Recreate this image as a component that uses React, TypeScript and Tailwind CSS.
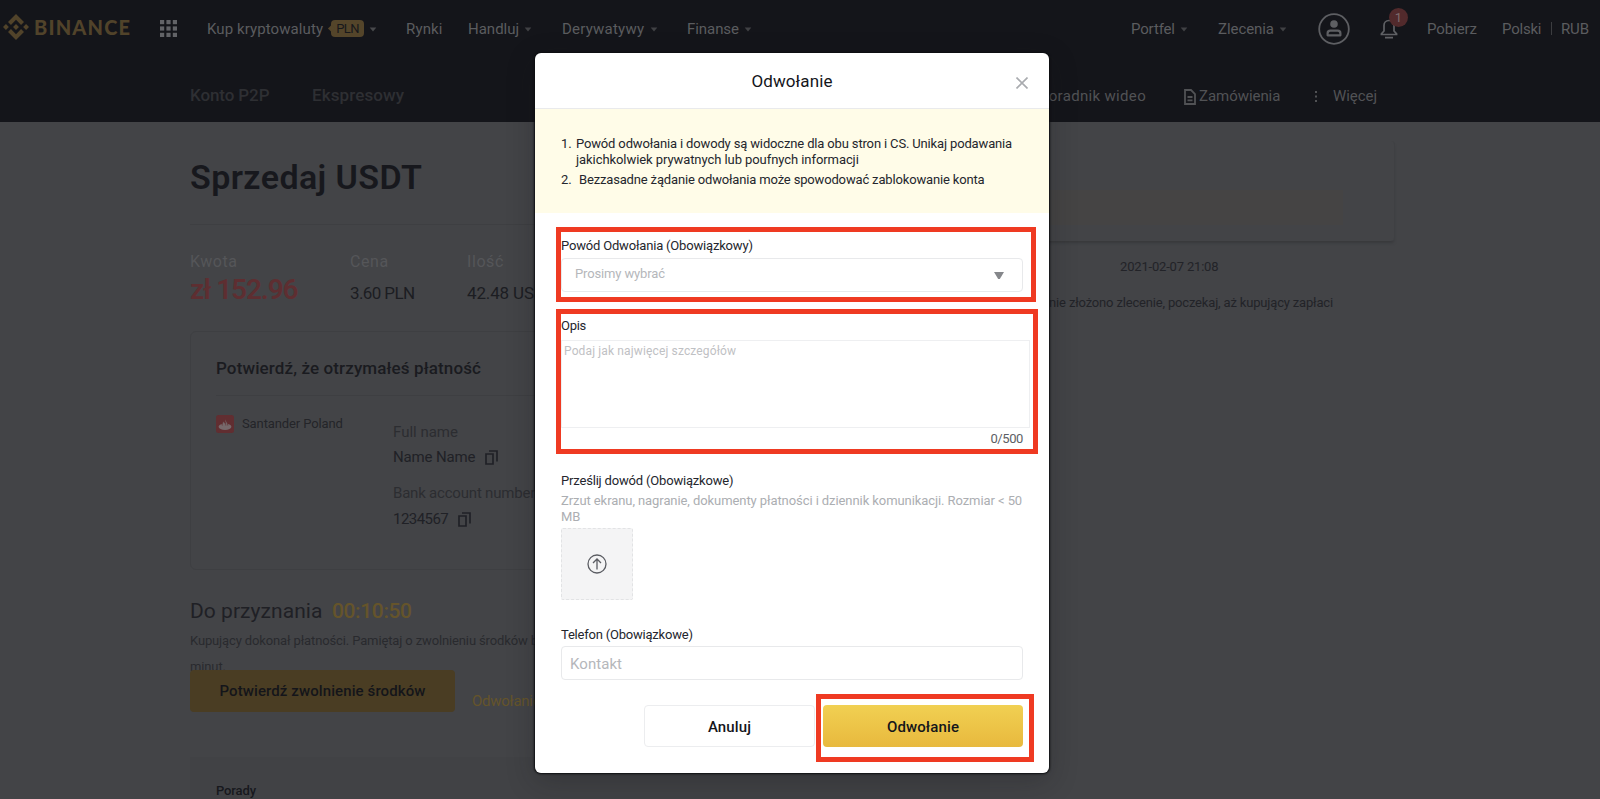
import type { ReactNode } from "react";

function Caret({ className = "" }: { className?: string }) {
  return (
    <svg viewBox="-0.5 -0.5 9 6" className={`mt-px h-[5px] w-2 shrink-0 ${className}`} fill="currentColor">
      <path d="M0 0h8L4 5z" />
    </svg>
  );
}

function Logo() {
  return (
    <div className="flex w-[157px] shrink-0 items-center pb-[4px] pl-[3px] text-[#51432a]">
      <svg viewBox="0 0 126.6 126.6" className="h-[26px] w-[26px]" fill="currentColor">
        <path d="M38.7 53.2l24.6-24.6 24.6 24.6 14.3-14.3L63.3 0 24.4 38.9zM0 63.3l14.3-14.3 14.3 14.3-14.3 14.3zM38.7 73.4l24.6 24.6 24.6-24.6 14.3 14.3-38.9 38.9-38.9-38.9zM98 63.3l14.3-14.3 14.3 14.3-14.3 14.3zM77.8 63.3L63.3 48.8 48.8 63.3l14.5 14.5z" />
      </svg>
      <span className="ml-[5px] font-[Lato] text-[20px] leading-[26px] font-black tracking-[1.17px]">BINANCE</span>
    </div>
  );
}

function GridIcon() {
  return (
    <svg viewBox="0 0 17 17" className="ml-[3px] h-[17px] w-[17px] shrink-0 text-[#626367]" fill="currentColor">
      {[0, 6.4, 12.8].map((y) =>
        [0, 6.4, 12.8].map((x) => <rect key={`${x}-${y}`} x={x} y={y} width="4.2" height="4.2" />)
      )}
    </svg>
  );
}

function CopyIcon() {
  return (
    <svg viewBox="0 0 13 15" className="h-[15px] w-[13px] text-[#202127]" fill="none" stroke="currentColor" strokeWidth="1.7">
      <path d="M1 4h7v10H1zM4 1h8v10.5" />
    </svg>
  );
}

function Navbar() {
  return (
    <nav className="flex h-[57px] items-center text-[15px] text-[#5b5c5f]">
      <Logo />
      <GridIcon />
      <span className="ml-[30px] w-[117px] pt-[2px] tracking-[0.09px]">Kup kryptowaluty</span>
      <span className="relative ml-[7px] flex h-[17px] w-[33px] items-center justify-center rounded bg-[#54452a] text-[13px] tracking-[-0.6px] text-[#17181c]">
        <i className="absolute top-[6px] -left-[2px] h-[5px] w-[5px] rotate-45 bg-[#54452a]" />
        PLN
      </span>
      <Caret className="ml-[5px] text-[#48494c]" />
      <span className="ml-[29px] w-[37px] pt-[2px] tracking-[0.16px]">Rynki</span>
      <span className="ml-[25px] w-[51px] pt-[2px]">Handluj</span>
      <Caret className="ml-[5px] text-[#404144]" />
      <span className="ml-[30px] w-[83px] pt-[2px] tracking-[0.23px]">Derywatywy</span>
      <Caret className="ml-[5px] text-[#404144]" />
      <span className="ml-[29px] w-[52px] pt-[2px] tracking-[-0.06px]">Finanse</span>
      <Caret className="ml-[5px] text-[#404144]" />
      <div className="ml-auto flex items-center pr-[11px]">
        <span className="w-[45px] pt-[2px] tracking-[-0.15px]">Portfel</span>
        <Caret className="ml-[4px] text-[#404144]" />
        <span className="ml-[30px] w-[57px] pt-[2px] tracking-[-0.07px]">Zlecenia</span>
        <Caret className="ml-[4px] text-[#404144]" />
        <svg viewBox="0 0 32 32" className="ml-[31px] h-8 w-8" fill="none" stroke="#5e5f63" strokeWidth="1.8">
          <circle cx="16" cy="16" r="14.8" />
          <circle cx="16" cy="11" r="3.8" fill="#5e5f63" stroke="none" />
          <path d="M9.6 22.300v-2.100c0-1.800 1.200-2.600 2.800-2.600h7.200c1.600 0 2.800.8 2.800 2.600v2.100z" strokeWidth="2.200" strokeLinejoin="round" />
        </svg>
        <span className="relative ml-[30px]">
          <svg viewBox="0 0 18 21" className="h-[21px] w-[18px]" fill="none" stroke="#606165" strokeWidth="1.7">
            <path d="M9 2.500c-3.200 0-5 2.300-5 5v5.500l-2.600 2.800v.7h15.200v-.7L14 13V7.500c0-2.700-1.800-5-5-5zM5 19.600h8" />
          </svg>
          <b className="absolute -top-[10px] left-[9px] flex h-[19px] w-[19px] items-center justify-center rounded-full bg-[#522a2c] text-[13px] font-normal text-[#7d6a6c]">
            1
          </b>
        </span>
        <span className="ml-[29px] w-[51px] pt-[2px] tracking-[-0.08px]">Pobierz</span>
        <span className="ml-[24px] w-[40px] pt-[2px] tracking-[-0.21px]">Polski</span>
        <i className="mx-[9px] h-[13px] w-px bg-[#3c3d40]" />
        <span className="w-[28px] pt-[2px] tracking-[-0.16px]">RUB</span>
      </div>
    </nav>
  );
}

function SubNav() {
  return (
    <div className="flex h-[65px] items-center pt-[12px] pr-[223px] pl-[190px]">
      <span className="w-[122px] text-[17px] font-medium tracking-[-0.1px] text-[#2e2f33]">Konto P2P</span>
      <span className="text-[17px] font-medium tracking-[0.12px] text-[#2e2f33]">Ekspresowy</span>
      <div className="ml-auto flex items-center pt-[2px] text-[15px] text-[#515255]">
        <span className="tracking-[0.32px]">Poradnik wideo</span>
        <svg viewBox="0 0 12 16" className="ml-[38px] h-4 w-3" fill="none" stroke="currentColor" strokeWidth="1.8">
          <path d="M1 1h6l4 4v10H1zM3.500 8h5M3.500 11.300h5" />
        </svg>
        <span className="ml-[3px] w-[82px] tracking-[-0.05px]">Zamówienia</span>
        <svg viewBox="0 0 2 11" className="ml-[34px] h-[11px] w-[2px]" fill="currentColor">
          <path d="M0 0h2v2H0zM0 4.500h2v2H0zM0 9h2v2H0z" />
        </svg>
        <span className="ml-[16px] w-[44px] tracking-[-0.06px]">Więcej</span>
      </div>
    </div>
  );
}

function Stat({ label, children }: { label: string; children: ReactNode }) {
  return (
    <div>
      <div className="text-[16px] leading-5 tracking-[0.58px] text-[#555659]">{label}</div>
      <div className="mt-[2px] h-8 text-[17px] leading-[38px] text-[#1c1d22]">{children}</div>
    </div>
  );
}

function PaymentCard() {
  return (
    <div className="mt-[25px] h-[239px] rounded-md border border-[#3e3f42] px-[25px] pt-[24px]">
      <h2 className="text-[17px] leading-6 font-medium tracking-[0.12px] text-[#1a1b20]">
        Potwierdź, że otrzymałeś płatność
      </h2>
      <div className="mt-[15px] flex border-t border-[#3e3f42]">
        <div className="mt-[19px] flex h-[18px] w-[177px] items-center">
          <svg viewBox="0 0 18 18" className="h-[18px] w-[18px]">
            <rect width="18" height="18" rx="2.500" fill="#612e31" />
            <ellipse cx="9" cy="11.700" rx="6.400" ry="3.200" fill="#77696b" />
            <path d="M6.300 10.500c-.8-2 1-3 1.200-4.500 1 1.200 2.300 3 2.400 4.500M9.500 8c-.6-1.600-.6-2.600-.4-4 .8 2 2.800 3.500 2.700 6.500" fill="#77696b" stroke="#612e31" strokeWidth=".7" />
          </svg>
          <span className="ml-[8px] text-[13px] tracking-[-0.11px] text-[#242529]">Santander Poland</span>
        </div>
        <div className="pt-[26px] text-[15px] leading-5 whitespace-nowrap text-[#202126]">
          <div className="text-[#2c2d31]">Full name</div>
          <div className="mt-[5px] flex items-center">
            <span className="w-[92px] tracking-[-0.15px]">Name Name</span>
            <CopyIcon />
          </div>
          <div className="mt-[16px] tracking-[-0.2px] text-[#2c2d31]">Bank account number</div>
          <div className="mt-[6px] flex items-center">
            <span className="w-[65px] tracking-[-0.55px]">1234567</span>
            <CopyIcon />
          </div>
        </div>
      </div>
    </div>
  );
}

function Order() {
  return (
    <div className="w-[800px] shrink-0 pt-[35px]">
      <h1 className="text-[34px] leading-10 font-semibold tracking-[0.41px] text-[#17181d]">Sprzedaj USDT</h1>
      <div className="mt-[27px] grid grid-cols-[160px_117px_1fr] border-t border-[#3e3f42] pt-[27px]">
        <Stat label="Kwota">
          <span className="block text-[28px] leading-8 font-semibold tracking-[-1.1px] text-[#5e2e31]">zł 152.96</span>
        </Stat>
        <Stat label="Cena">
          <span className="tracking-[-0.6px]">3.60 PLN</span>
        </Stat>
        <Stat label="Ilość">
          <span className="tracking-[-0.15px]">42.48 USDT</span>
        </Stat>
      </div>
      <PaymentCard />
      <div className="mt-[27px] flex text-[21px] leading-7 text-[#1f2025]">
        <span className="w-[142px] tracking-[0.05px]">Do przyznania</span>
        <span className="font-medium tracking-[-0.38px] text-[#65542b]">00:10:50</span>
      </div>
      <p className="mt-[3px] text-[13px] leading-[26px] tracking-[-0.13px] text-[#292a2e]">
        Kupujący dokonał płatności. Pamiętaj o zwolnieniu środków być
        <br />
        minut.
      </p>
      <div className="relative -mt-[10px] flex">
        <button className="h-[42px] w-[265px] rounded bg-[#4a3d23] text-[15px] font-medium tracking-[0.1px] text-[#14151a]">
          Potwierdź zwolnienie środków
        </button>
        <span className="ml-[17px] pt-[21px] text-[15px] leading-5 tracking-[-0.25px] text-[#65542b]">Odwołanie</span>
      </div>
      <div className="mt-[45px] h-[60px] bg-[#414245] px-[26px] pt-[24px] text-[13px] leading-5 font-medium tracking-[-0.13px] text-[#17181d]">
        Porady
      </div>
    </div>
  );
}

function Chat() {
  return (
    <div className="w-[405px] shrink-0 pt-[19px] text-[13px] leading-5 text-[#222328]">
      <div className="h-[100px] rounded-sm border-r border-[#3f4043] pt-[49px] pr-[51px] shadow-[0_3px_3px_-1px_#38393c]">
        <div className="h-[35px] bg-[#454444]" />
      </div>
      <div className="mt-[16px] pl-[130px] tracking-[-0.18px]">2021-02-07 21:08</div>
      <div className="mt-[16px] flex justify-end pr-[62px] tracking-[-0.17px] whitespace-nowrap">
        Pomyślnie złożono zlecenie, poczekaj, aż kupujący zapłaci
      </div>
    </div>
  );
}

function Highlight({ className }: { className: string }) {
  return <div className={`pointer-events-none absolute border-[5px] border-[#ef3a22] ${className}`} />;
}

function AppealModal() {
  return (
    <div className="absolute top-[53px] left-[535px] h-[720px] w-[514px] overflow-hidden rounded-md bg-white text-[13px] text-[#24262d]">
      <div className="relative flex h-[56px] items-center justify-center border-b border-[#e9eaec] pt-[2px] text-[17px] tracking-[0.11px] text-[#14151a]">
        Odwołanie
        <svg viewBox="0 0 12 12" className="absolute top-[24px] right-[21px] h-3 w-3" fill="none" stroke="#a9abaf" strokeWidth="1.6">
          <path d="M.5.5l11 11M11.500.5l-11 11" />
        </svg>
      </div>
      <ol className="h-[104px] bg-[#fffce8] pt-[27px] pl-[26px] leading-4 whitespace-nowrap">
        <li className="flex">
          <span className="w-[15px]">1.</span>
          <div>
            <div className="tracking-[-0.15px]">Powód odwołania i dowody są widoczne dla obu stron i CS. Unikaj podawania</div>
            <div className="tracking-[-0.07px]">jakichkolwiek prywatnych lub poufnych informacji</div>
          </div>
        </li>
        <li className="mt-[4px] flex tracking-[-0.16px]">
          <span className="w-[18px]">2.</span>
          Bezzasadne żądanie odwołania może spowodować zablokowanie konta
        </li>
      </ol>
      <div className="px-[26px] pt-[23px] leading-5">
        <div className="relative">
          <div className="tracking-[-0.18px]">Powód Odwołania (Obowiązkowy)</div>
          <div className="mt-[2px] flex h-[34px] items-center justify-between rounded border border-[#e8e9eb] pr-[18px] pb-[2px] pl-[13px] tracking-[-0.14px] text-[#b5b7bb]">
            Prosimy wybrać
            <svg viewBox="0 0 10 7" className="mt-[2px] h-[7px] w-[10px]">
              <path d="M0 0h10L5.800 7H4.200z" fill="#85878b" />
            </svg>
          </div>
          <Highlight className="-top-[9px] -right-[13px] -bottom-[10px] -left-[5px]" />
        </div>
        <div className="relative mt-[24px]">
          <div className="tracking-[-0.3px]">Opis</div>
          <div className="mt-[4px] -mr-[7px] h-[88px] border border-[#eeeff1] px-[2px] pt-px text-[12px] leading-[18px] tracking-[0.14px] text-[#bfc1c4]">
            Podaj jak najwięcej szczegółów
          </div>
          <div className="mt-px text-right tracking-[-0.4px] text-[#5c5e64]">0/500</div>
          <Highlight className="-top-[7px] -right-[15px] -bottom-[5px] -left-[5px]" />
        </div>
        <div className="mt-[22px] tracking-[-0.18px]">Prześlij dowód (Obowiązkowe)</div>
        <div className="mt-[2px] leading-4 tracking-[-0.08px] whitespace-nowrap text-[#acaeb2]">
          Zrzut ekranu, nagranie, dokumenty płatności i dziennik komunikacji. Rozmiar &lt; 50
          <br />
          MB
        </div>
        <div className="mt-[3px] flex h-[72px] w-[72px] items-center justify-center rounded-xs border border-dashed border-[#e2e3e5] bg-[#f4f4f5]">
          <svg viewBox="0 0 20 20" className="h-5 w-5" fill="none" stroke="#5b5d63" strokeWidth="1.300">
            <circle cx="10" cy="10" r="9" />
            <path d="M10 15.500V5.200M6 9l4-4 4 4" />
          </svg>
        </div>
        <div className="mt-[25px] tracking-[-0.21px]">Telefon (Obowiązkowe)</div>
        <div className="mt-px flex h-[34px] items-center rounded border border-[#e8e9eb] pt-px pl-[8px] text-[15px] tracking-[0.06px] text-[#b5b7bb]">
          Kontakt
        </div>
        <div className="mt-[25px] flex justify-end text-[15px] font-medium text-[#14151a]">
          <button className="h-[42px] w-[171px] rounded border border-[#ecedef] pt-[2px] tracking-[0.11px]">Anuluj</button>
          <div className="relative ml-[8px]">
            <button className="h-[42px] w-[200px] rounded bg-linear-to-b from-[#f1d052] to-[#e8b93d] pt-[2px] tracking-[0.12px]">
              Odwołanie
            </button>
            <Highlight className="-top-[11px] -right-[11px] -bottom-[15px] -left-[7px] z-10" />
          </div>
        </div>
      </div>
    </div>
  );
}

export default function App() {
  return (
    <div className="relative h-[799px] overflow-hidden bg-[#434447] font-[Roboto,sans-serif]">
      <header className="h-[122px] bg-[#14151a]">
        <Navbar />
        <SubNav />
      </header>
      <main className="flex pl-[190px]">
        <Order />
        <Chat />
      </main>
      <div className="absolute top-[53px] left-[535px] h-[720px] w-[514px] rounded-md shadow-[0_0_2px_1px_#0c0d10,0_8px_28px_rgba(20,21,26,0.28)]" />
      <AppealModal />
    </div>
  );
}
